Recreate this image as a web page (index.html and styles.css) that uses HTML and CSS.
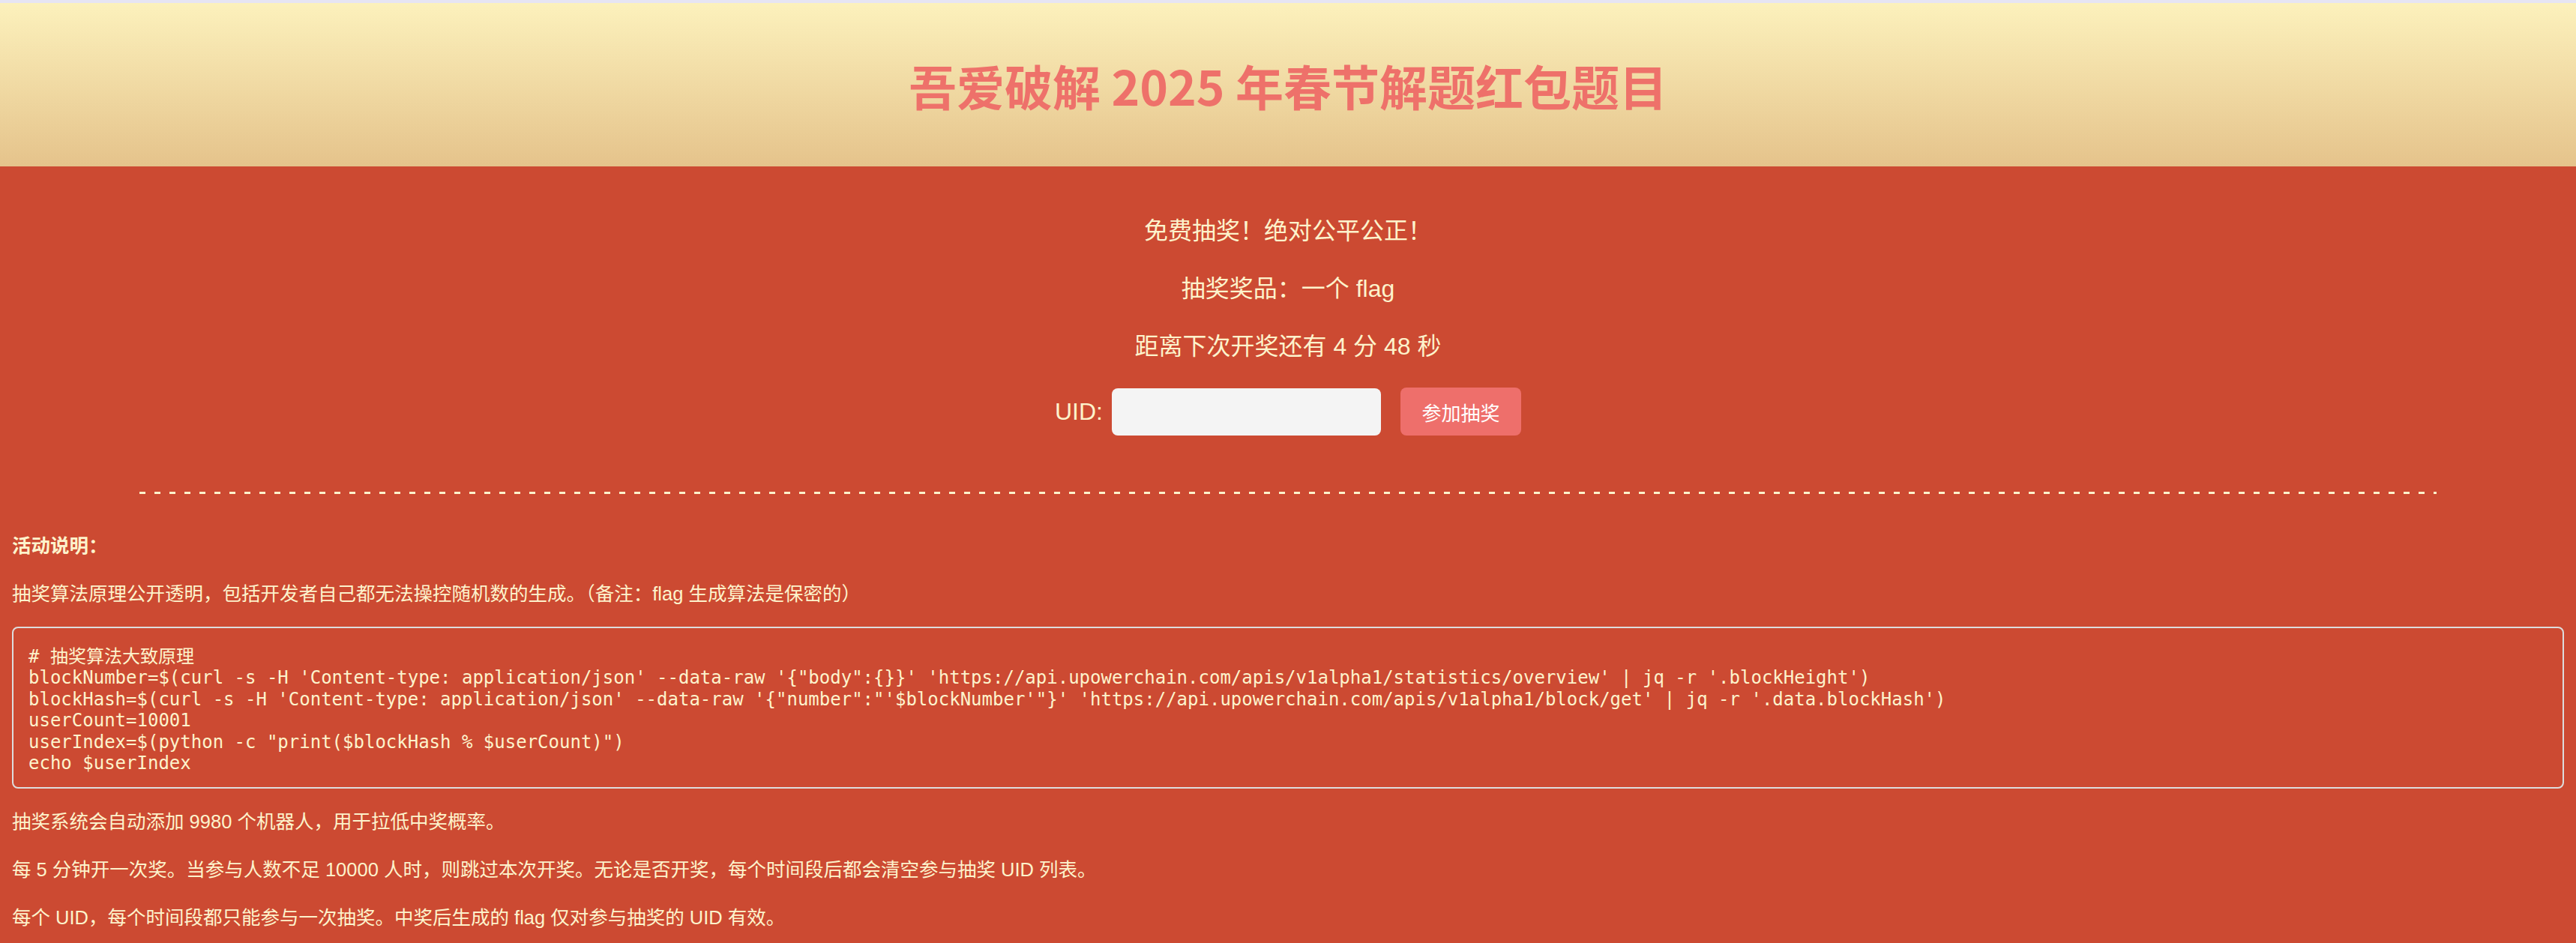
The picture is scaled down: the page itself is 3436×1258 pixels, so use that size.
FILE: index.html
```html
<!DOCTYPE html>
<html lang="zh-CN">
<head>
<meta charset="utf-8">
<title>吾爱破解 2025 年春节解题红包题目</title>
<link rel="stylesheet" href="styles.css">
</head>
<body>
<div class="strip"></div>
<header class="header">
  <h1 class="title">吾爱破解 2025 年春节解题红包题目</h1>
</header>
<section class="lottery">
  <p class="line">免费抽奖！绝对公平公正！</p>
  <p class="line">抽奖奖品：一个 flag</p>
  <p class="line">距离下次开奖还有 4 分 48 秒</p>
  <div class="form">
    <label class="uid-label">UID:</label>
    <input class="uid-input" type="text">
    <button class="join-btn">参加抽奖</button>
  </div>
</section>
<div class="divider-wrap"><div class="divider"></div></div>
<section class="info">
  <p class="info-p"><strong>活动说明：</strong></p>
  <p class="info-p">抽奖算法原理公开透明，包括开发者自己都无法操控随机数的生成。（备注：flag 生成算法是保密的）</p>
  <pre class="code"># 抽奖算法大致原理
blockNumber=$(curl -s -H 'Content-type: application/json' --data-raw '{"body":{}}' 'https://api.upowerchain.com/apis/v1alpha1/statistics/overview' | jq -r '.blockHeight')
blockHash=$(curl -s -H 'Content-type: application/json' --data-raw '{"number":"'$blockNumber'"}' 'https://api.upowerchain.com/apis/v1alpha1/block/get' | jq -r '.data.blockHash')
userCount=10001
userIndex=$(python -c "print($blockHash % $userCount)")
echo $userIndex</pre>
  <p class="info-p">抽奖系统会自动添加 9980 个机器人，用于拉低中奖概率。</p>
  <p class="info-p">每 5 分钟开一次奖。当参与人数不足 10000 人时，则跳过本次开奖。无论是否开奖，每个时间段后都会清空参与抽奖 UID 列表。</p>
  <p class="info-p">每个 UID，每个时间段都只能参与一次抽奖。中奖后生成的 flag 仅对参与抽奖的 UID 有效。</p>
</section>
</body>
</html>
```
FILE: styles.css
```css
html, body {
  margin: 0;
  padding: 0;
}
body {
  background: #cc4a32;
  color: #fdf3cc;
  font-family: "Liberation Sans", "Noto Sans CJK SC", sans-serif;
}
.strip {
  height: 4px;
  background: #e6e5f3;
}
.header {
  height: 218px;
  display: flex;
  align-items: center;
  justify-content: center;
  background: linear-gradient(to bottom, #fcf1bc, #e5c38b);
}
.title {
  margin: 0;
  font-size: 64px;
  line-height: 80px;
  font-weight: bold;
  color: #ee716a;
  font-family: "Noto Sans CJK SC", sans-serif;
}
.lottery {
  padding: 32px 16px 0;
  text-align: center;
}
.line {
  margin: 32px 0;
  font-size: 32px;
  line-height: 45px;
}
.form {
  display: flex;
  justify-content: center;
  align-items: center;
  height: 64px;
}
.uid-label {
  font-size: 32px;
  margin-right: 12px;
}
.uid-input {
  width: 359px;
  height: 63px;
  box-sizing: border-box;
  border: none;
  border-radius: 8px;
  background: #f4f4f4;
  margin: 0;
  padding: 0 12px;
  font-size: 26px;
}
.join-btn {
  margin-left: 26px;
  width: 161px;
  height: 64px;
  border: none;
  border-radius: 8px;
  background: #ee6f6b;
  color: #ffffff;
  font-size: 26px;
  font-family: "Noto Sans CJK SC", sans-serif;
  padding: 0;
}
.divider-wrap {
  padding: 75px 16px 0;
}
.divider {
  width: 90%;
  height: 3px;
  margin: 0 auto;
  background: repeating-linear-gradient(to right, #fdf3cc 0 8px, transparent 8px 20px);
}
.info {
  padding: 25px 16px 0;
}
.info-p {
  margin: 24px 0;
  font-size: 25.5px;
  line-height: 40px;
}
.code {
  margin: 24px 0;
  padding: 24px 20px 18px;
  border: 2px solid #dddddd;
  border-radius: 8px;
  font-family: "DejaVu Sans Mono", "Noto Sans CJK SC", monospace;
  font-size: 24px;
  line-height: 28.4px;
  color: #fdf3cc;
  white-space: pre;
  overflow: hidden;
}
```
